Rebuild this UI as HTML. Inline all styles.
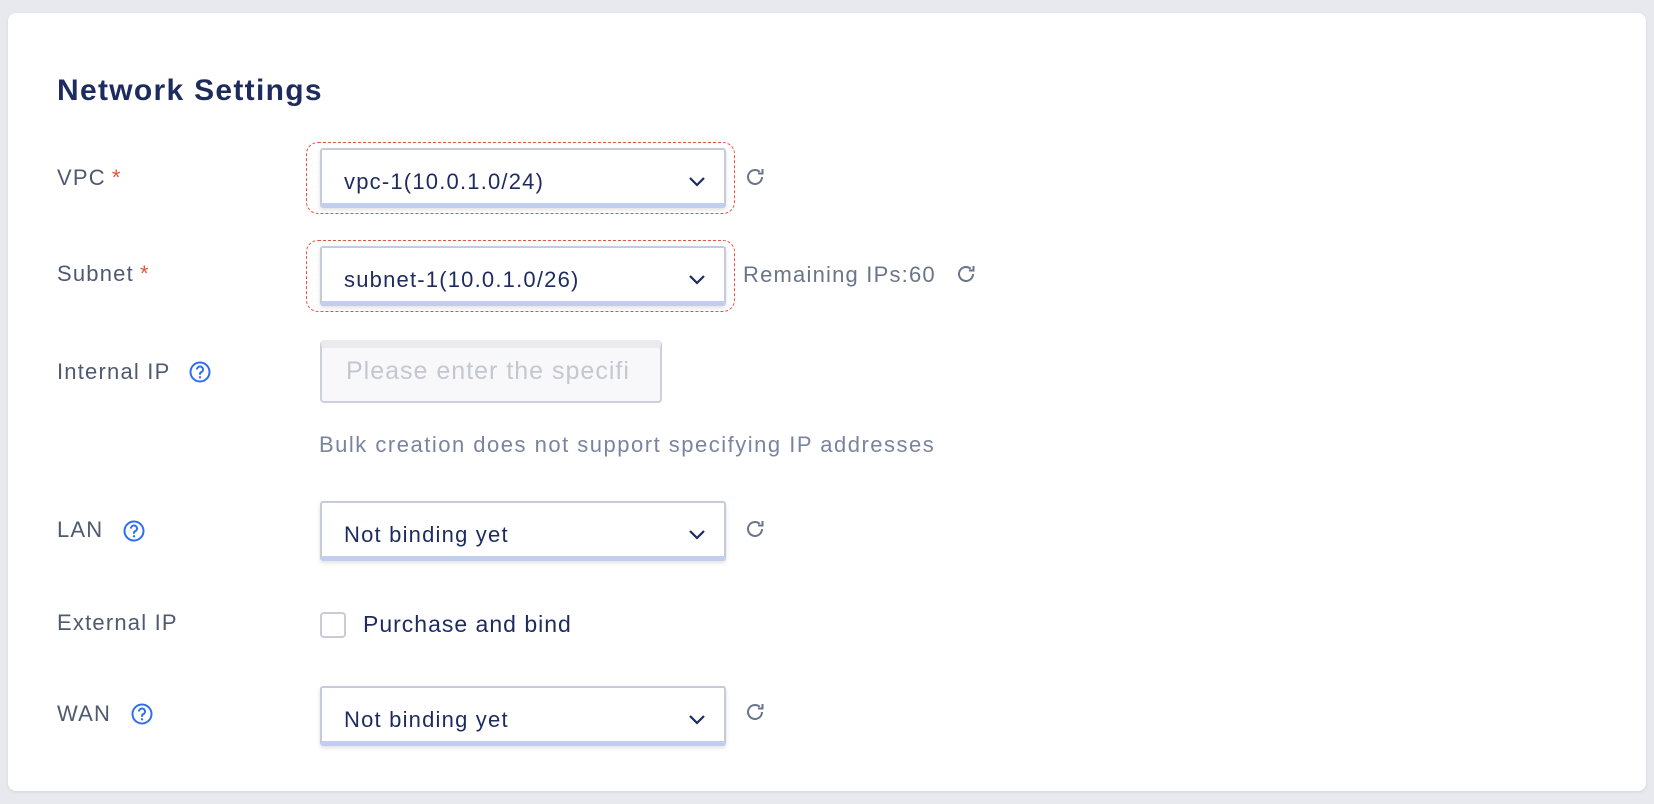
<!DOCTYPE html>
<html><head><meta charset="utf-8"><style>
*{box-sizing:border-box;margin:0;padding:0}
body{width:1654px;height:804px;background:#e7e9ef;font-family:"Liberation Sans",sans-serif;position:relative;overflow:hidden}
.card{position:absolute;left:8px;top:13px;width:1638px;height:778px;background:#fff;border-radius:8px;box-shadow:0 1px 3px rgba(0,0,0,.08)}
.abs{position:absolute}
h1{position:absolute;left:57px;top:74px;font-size:30px;letter-spacing:1.3px;font-weight:bold;color:#1d2b5e}
.lbl{position:absolute;left:57px;font-size:22px;letter-spacing:1.2px;color:#4f5a70;line-height:24px}
.star{color:#e5533d;margin-left:6px}
.sel{position:absolute;left:320px;width:406px;height:60px;background:#fff;border:2px solid #c7cbd9;border-bottom:5px solid #c2cef0;border-radius:3px;box-shadow:0 2px 4px rgba(0,0,0,.12);font-size:22px;letter-spacing:1.2px;color:#1d2b5e;padding-left:22px;padding-top:5px;line-height:53px}
.sel svg{position:absolute;right:18px;top:25px}
.dash{position:absolute;left:306px;width:429px;height:72px;border:1.5px dashed #e8553f;border-radius:12px}
.q{position:absolute;width:22px;height:22px}
.ref{position:absolute;width:22px;height:22px}
</style></head><body>
<div class="card"></div>
<h1>Network Settings</h1>

<div class="lbl" style="top:166px">VPC<span class="star">*</span></div>
<div class="dash" style="top:142px"></div>
<div class="sel" style="top:148px">vpc-1(10.0.1.0/24)<svg width="18" height="12" viewBox="0 0 18 12"><path d="M2 3l7 7 7-7" fill="none" stroke="#1d2b5e" stroke-width="2.2"/></svg></div>
<svg class="ref" style="left:744px;top:166px" viewBox="0 0 22 22"><path d="M18 11a7 7 0 1 1-2.3-5.2" fill="none" stroke="#6b7589" stroke-width="2"/><path d="M18.5 3v4.5H14" fill="none" stroke="#6b7589" stroke-width="2"/></svg>

<div class="lbl" style="top:262px">Subnet<span class="star">*</span></div>
<div class="dash" style="top:240px"></div>
<div class="sel" style="top:246px">subnet-1(10.0.1.0/26)<svg width="18" height="12" viewBox="0 0 18 12"><path d="M2 3l7 7 7-7" fill="none" stroke="#1d2b5e" stroke-width="2.2"/></svg></div>
<div class="abs" style="left:743px;top:262px;font-size:22px;letter-spacing:1.2px;color:#6b7589">Remaining IPs:60</div>
<svg class="ref" style="left:955px;top:263px" viewBox="0 0 22 22"><path d="M18 11a7 7 0 1 1-2.3-5.2" fill="none" stroke="#6b7589" stroke-width="2"/><path d="M18.5 3v4.5H14" fill="none" stroke="#6b7589" stroke-width="2"/></svg>

<div class="lbl" style="top:360px">Internal IP</div>
<svg class="q" style="left:189px;top:361px" viewBox="0 0 22 22"><circle cx="11" cy="11" r="9.5" fill="none" stroke="#2f6ef0" stroke-width="2"/><path d="M8 8.5a3 3 0 1 1 4.2 2.7c-.8.4-1.2 1-1.2 1.8v.8" fill="none" stroke="#2f6ef0" stroke-width="2"/><circle cx="11" cy="16.3" r="1.2" fill="#2f6ef0"/></svg>
<div class="abs" style="left:320px;top:340px;width:342px;height:63px;background:#f8f8fb;border:2px solid #cdd0dc;border-top:8px solid #ebebef;border-radius:4px;font-size:25px;letter-spacing:1px;color:#c4c7d0;padding-left:24px;line-height:46px;white-space:nowrap;overflow:hidden">Please enter the specifi</div>
<div class="abs" style="left:319px;top:432px;font-size:22px;letter-spacing:1.5px;color:#7a84a0">Bulk creation does not support specifying IP addresses</div>

<div class="lbl" style="top:518px">LAN</div>
<svg class="q" style="left:123px;top:520px" viewBox="0 0 22 22"><circle cx="11" cy="11" r="9.5" fill="none" stroke="#2f6ef0" stroke-width="2"/><path d="M8 8.5a3 3 0 1 1 4.2 2.7c-.8.4-1.2 1-1.2 1.8v.8" fill="none" stroke="#2f6ef0" stroke-width="2"/><circle cx="11" cy="16.3" r="1.2" fill="#2f6ef0"/></svg>
<div class="sel" style="top:501px">Not binding yet<svg width="18" height="12" viewBox="0 0 18 12"><path d="M2 3l7 7 7-7" fill="none" stroke="#1d2b5e" stroke-width="2.2"/></svg></div>
<svg class="ref" style="left:744px;top:518px" viewBox="0 0 22 22"><path d="M18 11a7 7 0 1 1-2.3-5.2" fill="none" stroke="#6b7589" stroke-width="2"/><path d="M18.5 3v4.5H14" fill="none" stroke="#6b7589" stroke-width="2"/></svg>

<div class="lbl" style="top:611px">External IP</div>
<div class="abs" style="left:320px;top:612px;width:26px;height:26px;border:2px solid #c9ccd8;border-radius:4px;background:#fff"></div>
<div class="abs" style="left:363px;top:611px;font-size:23px;letter-spacing:1px;color:#1d2b5e">Purchase and bind</div>

<div class="lbl" style="top:702px">WAN</div>
<svg class="q" style="left:131px;top:703px" viewBox="0 0 22 22"><circle cx="11" cy="11" r="9.5" fill="none" stroke="#2f6ef0" stroke-width="2"/><path d="M8 8.5a3 3 0 1 1 4.2 2.7c-.8.4-1.2 1-1.2 1.8v.8" fill="none" stroke="#2f6ef0" stroke-width="2"/><circle cx="11" cy="16.3" r="1.2" fill="#2f6ef0"/></svg>
<div class="sel" style="top:686px">Not binding yet<svg width="18" height="12" viewBox="0 0 18 12"><path d="M2 3l7 7 7-7" fill="none" stroke="#1d2b5e" stroke-width="2.2"/></svg></div>
<svg class="ref" style="left:744px;top:701px" viewBox="0 0 22 22"><path d="M18 11a7 7 0 1 1-2.3-5.2" fill="none" stroke="#6b7589" stroke-width="2"/><path d="M18.5 3v4.5H14" fill="none" stroke="#6b7589" stroke-width="2"/></svg>
</body></html>
